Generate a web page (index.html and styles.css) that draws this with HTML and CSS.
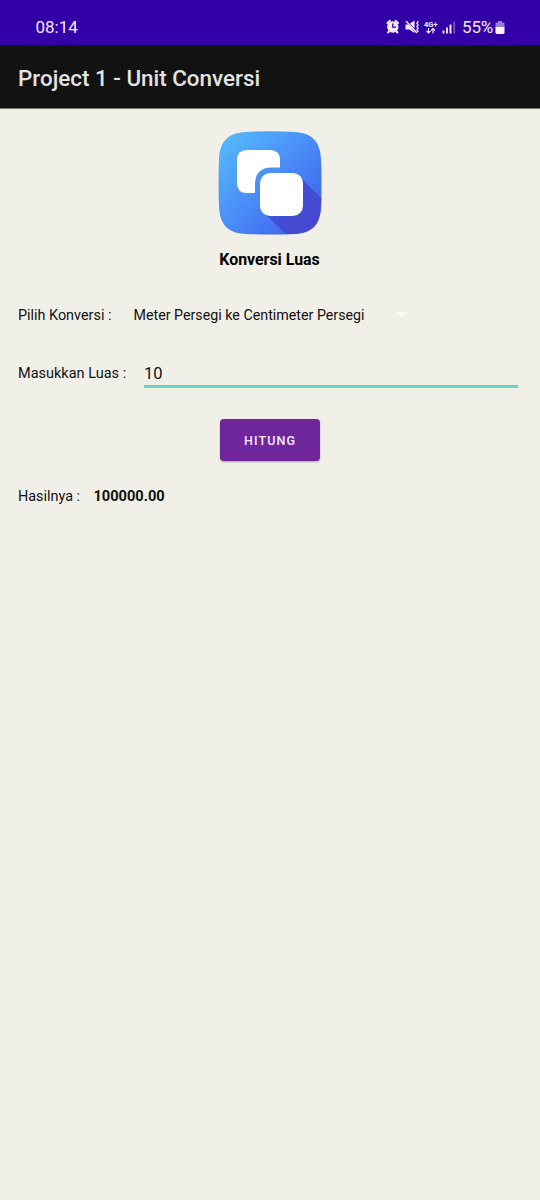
FILE: index.html
```html
<!DOCTYPE html>
<html lang="id">
<head>
<meta charset="utf-8">
<title>Project 1 - Unit Conversi</title>
<link rel="stylesheet" href="styles.css">
</head>
<body>
<header class="status">
  <span class="clock">08:14</span>
  <div class="indicators">
    <svg class="status-icons" width="74" height="18" viewBox="0 0 74 18">
      <g stroke="#f3eafc" fill="none" stroke-linecap="round">
        <path d="M1.500 5 4 2.800M9.500 2.800 12 5M3 13.500l-1 1M10.500 13.500l1 1" stroke-width="2"/>
        <circle cx="6.800" cy="9" r="5.700" fill="#f3eafc" stroke="none"/>
        <path d="M6.800 6v3.200h2.700" stroke="#3300a8" stroke-width="1.300"/>
        <path d="M20.500 3.500l10 11" stroke-width="1.400"/>
        <path d="M32 3.500l-1 1.700 1 1.700-1 1.700 1 1.700-1 1.700 1 1.700" stroke-width="1.400"/>
      </g>
      <path d="M19.500 6.500h3l5.800 7v1.500l-4.800-3.500h-4zM24 5.500 28.500 2.500v8z" fill="#f3eafc"/>
      <g stroke="#f3eafc" fill="none" stroke-width="1.200">
        <path d="M42.500 10v5M40.500 13l2 2 2-2M47 15.500v-5M45 12.500l2-2 2 2"/>
      </g>
      <text class="network" x="38" y="8.500" textLength="13.500" lengthAdjust="spacingAndGlyphs">4G+</text>
      <path d="M57.500 12.500v3M61 9.500v6M64.500 6.500v9" stroke="#f3eafc" stroke-width="1.900"/>
      <path d="M68.200 3.500v12" stroke="#7654c5" stroke-width="1.700"/>
    </svg>
    <span class="percent">55%</span>
    <svg class="battery" width="10" height="14" viewBox="0 0 10 14">
      <path d="M3 0h4v1.500h1.500Q9.500 1.500 9.500 2.500V7h-9V2.500Q.5 1.500 1.500 1.500H3z" fill="#9a7cd6"/>
      <path d="M.5 6h9v5.500q0 1.500-1.500 1.500H2Q.5 13 .5 11.500z" fill="#fbf5ff"/>
    </svg>
  </div>
</header>
<div class="appbar"><h1 class="title">Project 1 - Unit Conversi</h1></div>
<main class="content">
  <svg class="logo" width="104" height="104" viewBox="0 0 104 104">
    <defs>
      <linearGradient id="tile" x1="0" y1="0" x2="1" y2="1">
        <stop offset="0" stop-color="#55bdf8"/><stop offset=".5" stop-color="#4a8cf7"/><stop offset=".8" stop-color="#426bf0"/><stop offset="1" stop-color="#426bf0"/>
      </linearGradient>
      <linearGradient id="shade" x1="0" y1="0" x2="1" y2="1">
        <stop offset="0" stop-color="#3d58dc"/><stop offset="1" stop-color="#4745cc"/>
      </linearGradient>
    </defs>
    <path d="M28 1Q52-.5 76 1C94 2 102 10 103 28q1 24 0 48c-1 18-9 26-27 27q-24 1-48 0C10 102 2 94 1 76Q0 52 1 28C2 10 10 2 28 1z" fill="url(#tile)"/>
    <path d="M81 45l22.400 22.500L103 76c-1 18-9 26-27 27l-8 .3L45 81z" fill="url(#shade)"/>
    <path d="M29 19h23q10 0 10 10v7.500h-8q-17 0-17 17v8.500h-8q-10 0-10-10V29q0-10 10-10z" fill="#fff"/>
    <rect x="42" y="42" width="43" height="43" rx="10" fill="#fff"/>
  </svg>
  <h2 class="heading">Konversi Luas</h2>
  <div class="row select-row">
    <span class="select-label">Pilih Konversi :</span>
    <span class="selected">Meter Persegi ke Centimeter Persegi</span>
    <svg width="10" height="6" viewBox="0 0 10 6"><path d="M0 0h10L5 5.500z" fill="#fbfbf7"/></svg>
  </div>
  <div class="row input-row">
    <span class="input-label">Masukkan Luas :</span>
    <div class="field">10</div>
  </div>
  <button class="submit">HITUNG</button>
  <div class="row result-row"><span class="result-label">Hasilnya :</span><strong class="result">100000.00</strong></div>
</main>
</body>
</html>
```
FILE: styles.css
```css
* { box-sizing: border-box; }
body { margin: 0; min-height: 1200px; background: #f1f0e8; color: #111; font-family: Roboto, sans-serif; }
.status { height: 45px; padding: 9px 35px 0 35.500px; display: flex; justify-content: space-between; background: #3300a8; color: #f3eafc; }
.clock, .percent { font-size: 17px; line-height: 37px; height: 36px; }
.indicators { display: flex; align-items: flex-start; }
.status-icons { margin-top: 9px; margin-right: 2px; }
.percent { letter-spacing: -.2px; }
.battery { margin: 12px 0 0 2px; }
.network { font: 700 7.500px Roboto, sans-serif; fill: #f3eafc; }
.appbar { height: 64px; padding: 2px 18px 0; display: flex; align-items: center; background: #121212; border-bottom: 1px solid #777772; }
.title { margin: 0; font-size: 22.400px; font-weight: 500; color: #e3e3e3; }
.content { display: flex; flex-direction: column; align-items: center; padding: 22px 22px 0 18px; }
.logo { display: block; margin-left: 3px; }
.heading { margin: 14px 0 0 3px; font-size: 15.900px; line-height: 22px; font-weight: 700; color: #000; }
.row { width: 100%; display: flex; align-items: center; font-size: 14.400px; }
.select-row { height: 24px; margin-top: 32px; }
.select-label { width: 115.500px; }
.selected { width: 263.500px; font-size: 14.250px; }
.input-row { height: 38px; margin-top: 22.500px; }
.input-label { width: 126px; padding-top: 11px; font-size: 14.500px; line-height: 24px; }
.field { flex: 1; height: 38px; padding-top: 13px; border-bottom: 3px solid #68d5c4; font-size: 16.500px; line-height: 22px; }
.submit { width: 100px; height: 42px; margin: 31.500px 0 0 4px; padding: 0; border: 0; border-radius: 4px; background: #70269b; color: #f8edff; font: 500 12.500px Roboto, sans-serif; letter-spacing: 1.100px; box-shadow: 0 1px 2px #0005; }
.result-row { height: 24px; margin-top: 23px; }
.result-label { width: 75.500px; }
.result { font-size: 14.600px; font-weight: 700; }
```
